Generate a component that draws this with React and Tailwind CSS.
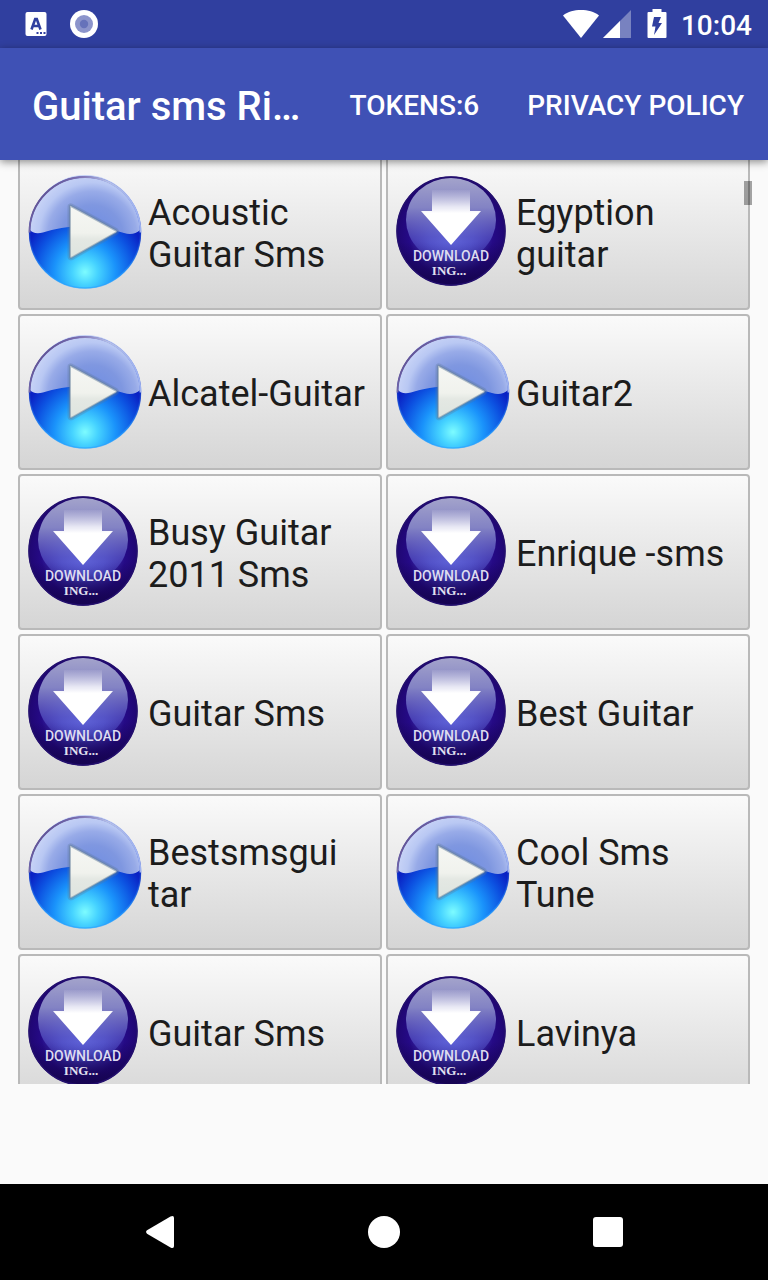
import React from "react";

const tones = [
  { kind: "play", name: "Acoustic Guitar Sms" },
  { kind: "download", name: "Egyption guitar" },
  { kind: "play", name: "Alcatel-Guitar" },
  { kind: "play", name: "Guitar2" },
  { kind: "download", name: "Busy Guitar 2011 Sms" },
  { kind: "download", name: "Enrique -sms" },
  { kind: "download", name: "Guitar Sms" },
  { kind: "download", name: "Best Guitar" },
  { kind: "play", name: "Bestsmsgui|tar" },
  { kind: "play", name: "Cool Sms Tune" },
  { kind: "download", name: "Guitar Sms" },
  { kind: "download", name: "Lavinya" },
];

// Gradients shared by every tone icon.
function IconDefs() {
  return (
    <svg width="0" height="0" className="absolute" aria-hidden="true">
      <defs>
        <radialGradient id="playBase" gradientUnits="userSpaceOnUse" cx="57" cy="96" r="64">
          <stop offset="0" stopColor="#7dfcff" />
          <stop offset="0.2" stopColor="#46d3ff" />
          <stop offset="0.48" stopColor="#1a93fb" />
          <stop offset="0.78" stopColor="#0c50e0" />
          <stop offset="1" stopColor="#0a22c4" />
        </radialGradient>
        <radialGradient id="playGlass" gradientUnits="userSpaceOnUse" cx="64" cy="60" r="62">
          <stop offset="0" stopColor="#6a8ae4" />
          <stop offset="0.5" stopColor="#7f97e0" />
          <stop offset="0.72" stopColor="#98abe8" />
          <stop offset="0.86" stopColor="#b9c8f3" />
          <stop offset="1" stopColor="#c6d2f6" />
        </radialGradient>
        <linearGradient id="playRim" x1="0" y1="0.1" x2="1" y2="0.5">
          <stop offset="0" stopColor="#4b3878" />
          <stop offset="0.35" stopColor="#7b6fb0" />
          <stop offset="0.6" stopColor="#b5bfe8" />
          <stop offset="1" stopColor="#9fb3f0" />
        </linearGradient>
        <linearGradient id="playRimFade" x1="0" y1="0" x2="0" y2="1">
          <stop offset="0.5" stopColor="#1438c8" stopOpacity="0.7" />
          <stop offset="0.85" stopColor="#2aa0ff" stopOpacity="0.6" />
        </linearGradient>
        <linearGradient id="playArrow" x1="0" y1="0" x2="0" y2="1">
          <stop offset="0" stopColor="#f6f7f4" />
          <stop offset="0.52" stopColor="#f0f2ed" />
          <stop offset="0.64" stopColor="#e4e8e3" />
          <stop offset="1" stopColor="#dde4df" />
        </linearGradient>
        <radialGradient id="dlBase" gradientUnits="userSpaceOnUse" cx="55" cy="60" r="56">
          <stop offset="0" stopColor="#6c74ee" />
          <stop offset="0.4" stopColor="#4a47c4" />
          <stop offset="0.75" stopColor="#250a86" />
          <stop offset="1" stopColor="#1f0670" />
        </radialGradient>
        <linearGradient id="dlGlass" x1="0" y1="0" x2="0" y2="1">
          <stop offset="0" stopColor="#a3a3cb" />
          <stop offset="0.35" stopColor="#8383c4" />
          <stop offset="0.7" stopColor="#5a59c6" stopOpacity="0.7" />
          <stop offset="1" stopColor="#5a62e0" stopOpacity="0.08" />
        </linearGradient>
        <linearGradient id="dlArrow" x1="0" y1="0" x2="0" y2="1">
          <stop offset="0" stopColor="#ffffff" stopOpacity="0.05" />
          <stop offset="0.3" stopColor="#ffffff" stopOpacity="0.8" />
          <stop offset="0.42" stopColor="#ffffff" />
        </linearGradient>
        <linearGradient id="dlFoot" x1="0" y1="0" x2="0" y2="1">
          <stop offset="0.6" stopColor="#14034c" stopOpacity="0" />
          <stop offset="0.95" stopColor="#14034c" stopOpacity="0.85" />
        </linearGradient>
      </defs>
    </svg>
  );
}

function PlayIcon() {
  return (
    <svg width="114" height="114" viewBox="0 -1 114 114" className="shrink-0" aria-hidden="true">
      <circle cx="57" cy="56.500" r="56" fill="url(#playBase)" />
      <path
        d="M2 54A55 55 0 0 1 112 54C108 58 102 59 96 57C84 54 73 50 56 50C40 50 26 53 15 56.500C9 58 4 57 2 54Z"
        fill="url(#playGlass)"
      />
      <circle cx="57" cy="56.500" r="55.500" fill="none" stroke="url(#playRimFade)" strokeWidth="1.500" />
      <path d="M1.500 56.500A55.500 55.500 0 0 1 112.500 56.500" fill="none" stroke="url(#playRim)" strokeWidth="1.800" />
      <path
        d="M43 30L88 54.500Q89.500 55.500 88 56.500L44 81.500Q42 82.500 42 80.500V30.500Q42 29.500 43 30Z"
        fill="none"
        stroke="#5c7794"
        strokeOpacity="0.3"
        strokeWidth="5"
        strokeLinejoin="round"
      />
      <path
        d="M43 30L88 54.500Q89.500 55.500 88 56.500L44 81.500Q42 82.500 42 80.500V30.500Q42 29.500 43 30Z"
        fill="url(#playArrow)"
        stroke="#66809c"
        strokeOpacity="0.5"
        strokeWidth="2"
        strokeLinejoin="round"
      />
    </svg>
  );
}

function DownloadIcon() {
  return (
    <svg width="114" height="114" viewBox="0 0 114 114" className="shrink-0" aria-hidden="true">
      <circle cx="55" cy="56" r="54.500" fill="url(#dlBase)" />
      <circle cx="55" cy="56" r="54.500" fill="url(#dlFoot)" />
      <ellipse cx="55" cy="45" rx="45" ry="42" fill="url(#dlGlass)" />
      <circle cx="55" cy="56" r="54" fill="none" stroke="#24106e" strokeWidth="1.500" />
      <path d="M36 15H74V36H85L55 70L25 36H36Z" fill="url(#dlArrow)" />
      <text
        x="55"
        y="86"
        textAnchor="middle"
        fill="#dedcf0"
        className="font-[Roboto,sans-serif] text-[14px] font-medium"
      >
        DOWNLOAD
      </text>
      <text
        x="53"
        y="100"
        textAnchor="middle"
        fill="#e2e0f0"
        className="font-['Liberation_Serif',serif] text-[13px] font-bold"
      >
        ING...
      </text>
    </svg>
  );
}

function ToneButton({ tone }) {
  const parts = tone.name.split("|");
  return (
    <button
      type="button"
      className="flex h-[156px] min-w-0 items-center gap-1.5 rounded border-2 border-[#b9b9b9] bg-linear-to-b from-[#fafafa] to-[#d5d5d5] px-2 text-left"
    >
      {tone.kind === "play" ? <PlayIcon /> : <DownloadIcon />}
      <span className="min-w-0 flex-1 pt-1 text-[36px] leading-[42px] wrap-anywhere text-[#1c1c1c]">
        {parts.map((part, i) => (
          <React.Fragment key={i}>
            {i > 0 && <wbr />}
            {part}
          </React.Fragment>
        ))}
      </span>
    </button>
  );
}

function StatusBar() {
  return (
    <div className="flex h-12 shrink-0 items-center justify-between bg-[#303f9f] pr-4 pl-6 text-white">
      <div className="flex items-center gap-5">
        <svg width="26" height="28" viewBox="0 0 26 28" aria-hidden="true">
          <rect x="1.500" y="2" width="21" height="24" rx="2" fill="#fff" />
          <path d="M7.500 19.500L11.200 9H12.800L16.500 19.500M9 16H15" fill="none" stroke="#303f9f" strokeWidth="2.600" />
          <path d="M12.500 22H14.500V24H12.500ZM16 22H18V24H16ZM19.500 22H21.500V24H19.500Z" fill="#303f9f" />
        </svg>
        <svg width="28" height="28" viewBox="0 0 28 28" aria-hidden="true">
          <circle cx="14" cy="14" r="14" fill="#fff" />
          <circle cx="14" cy="14" r="9" fill="#8c94cb" />
          <circle cx="14" cy="14" r="4.200" fill="#6672ba" />
        </svg>
      </div>
      <div className="flex items-center">
        <svg width="36" height="30" viewBox="0 0 36 30" aria-hidden="true">
          <path d="M18 29L0 6.500C5 2.500 11 1 18 1S31 2.500 36 6.500Z" fill="#fff" />
        </svg>
        <svg width="28" height="30" viewBox="0 0 28 30" className="ml-1" aria-hidden="true">
          <path d="M28 1V29H0Z" fill="#fff" fillOpacity="0.35" />
          <path d="M17 12V29H0Z" fill="#fff" />
        </svg>
        <svg width="20" height="30" viewBox="0 0 20 30" className="ml-4" aria-hidden="true">
          <path d="M5.500 0H14.500V3H18.500Q19.500 3 19.500 4V28Q19.500 29 18.500 29H1.500Q.5 29 .5 28V4Q.5 3 1.500 3H5.500Z" fill="#fff" />
          <path d="M7 8H14L11.500 14H15L7 26L8.500 17.500H5Z" fill="#303f9f" />
        </svg>
        <span className="ml-3.5 pt-1 text-[28px] leading-8 font-medium">10:04</span>
      </div>
    </div>
  );
}

function AppBar() {
  return (
    <header className="z-10 flex h-28 shrink-0 items-center bg-[#3f51b5] pl-8 text-white shadow-[0_2px_8px_rgba(0,0,0,0.45)]">
      <h1 className="min-w-0 flex-1 truncate pt-1.5 text-[40px] leading-[48px] font-medium">Guitar sms Ri…</h1>
      <button type="button" className="px-6 pt-1 text-[28px] leading-8 font-medium whitespace-nowrap">
        TOKENS:6
      </button>
      <button type="button" className="px-6 pt-1 text-[28px] leading-8 font-medium whitespace-nowrap">
        PRIVACY POLICY
      </button>
    </header>
  );
}

function NavBar() {
  return (
    <nav className="flex h-24 shrink-0 items-center justify-center gap-44 bg-black">
      <button type="button" aria-label="Back" className="flex size-12 items-center justify-center">
        <svg width="28" height="32" viewBox="0 0 28 32" aria-hidden="true">
          <path d="M1 14.300L24.500 .5Q28 -1 28 2V30Q28 33 24.500 31.500L1 17.700Q-.8 16 1 14.300Z" fill="#fff" />
        </svg>
      </button>
      <button type="button" aria-label="Home" className="flex size-12 items-center justify-center">
        <span className="size-8 rounded-full bg-white" />
      </button>
      <button type="button" aria-label="Recent apps" className="flex size-12 items-center justify-center">
        <span className="size-[30px] rounded-[3px] bg-white" />
      </button>
    </nav>
  );
}

export default function App() {
  return (
    <div className="flex h-screen flex-col bg-[#fafafa] font-[Roboto,sans-serif]">
      <IconDefs />
      <StatusBar />
      <AppBar />
      <main className="relative -mt-1.5 mb-[100px] min-h-0 flex-1 overflow-hidden px-[18px]">
        <div className="grid grid-cols-2 gap-1">
          {tones.map((tone, i) => (
            <ToneButton key={i} tone={tone} />
          ))}
        </div>
        <div className="absolute top-[27px] right-4 h-6 w-2 bg-black/35" />
      </main>
      <NavBar />
    </div>
  );
}
